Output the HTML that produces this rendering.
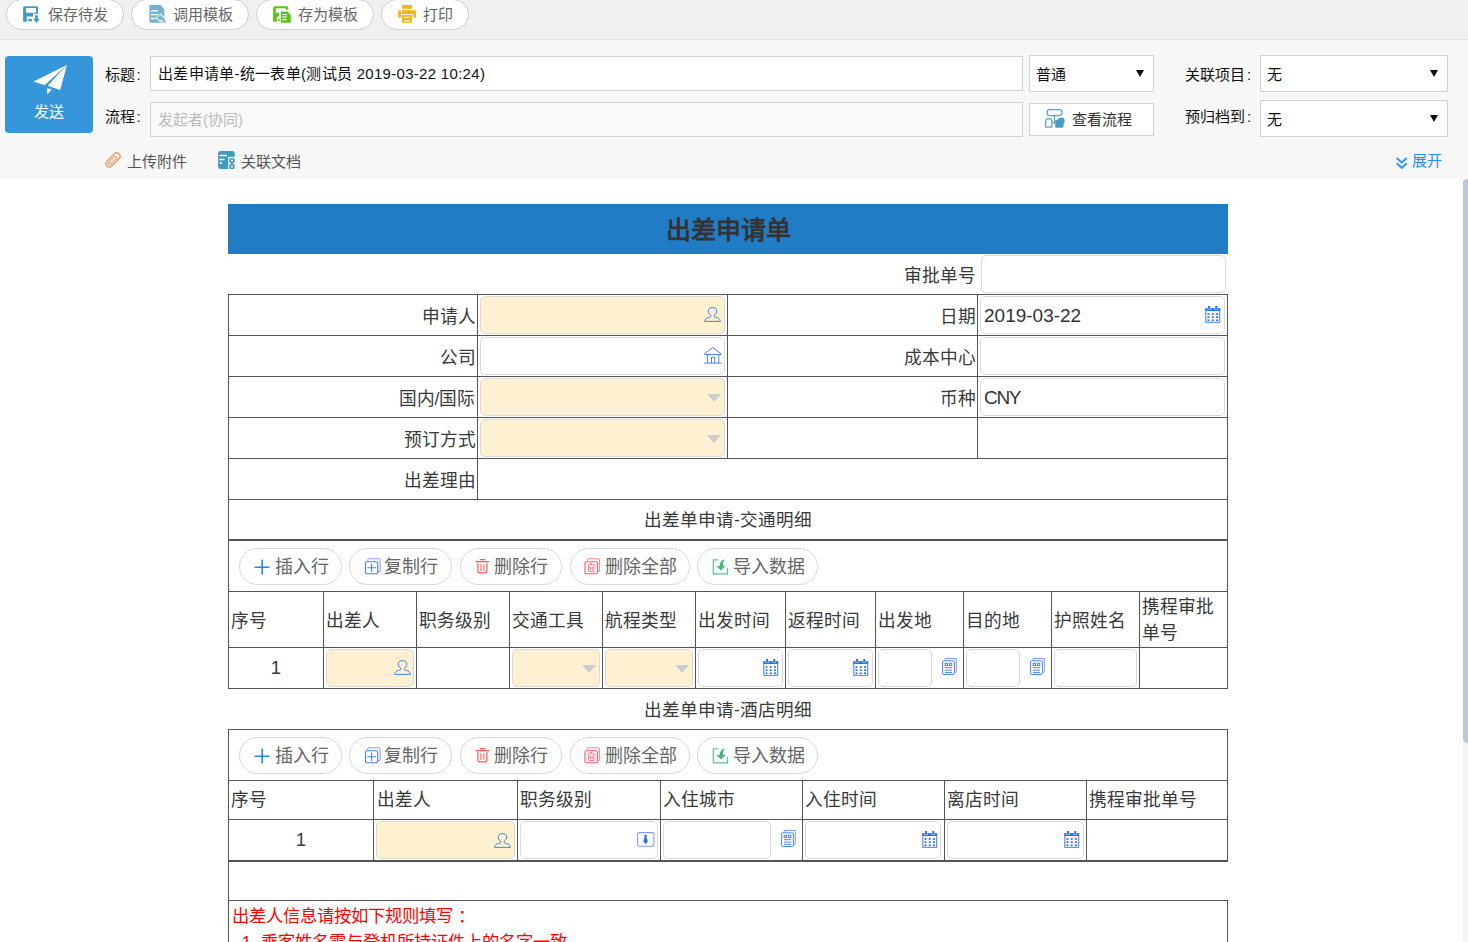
<!DOCTYPE html>
<html lang="zh-CN">
<head>
<meta charset="utf-8">
<title>出差申请单</title>
<style>
html,body{margin:0;padding:0}
html{width:1468px;height:942px;overflow:hidden}
body{width:1468px;height:942px;overflow:hidden;position:relative;background:#fff;font-family:"Liberation Sans",sans-serif;color:#333;font-size:15px}
div,span,svg{position:absolute;box-sizing:border-box;white-space:nowrap}
svg{overflow:visible}
#topbar{left:0;top:0;width:1468px;height:40px;background:#f0f0f0;border-bottom:1px solid #e3e3e3}
.pill{top:-1px;height:31px;border:1px solid #cfcfcf;border-radius:16px;background:#fff;color:#666;font-size:15px;line-height:29px}
.pill span{top:0;left:41px}
#head{left:0;top:40px;width:1468px;height:139px;background:#f7f7f7}
#send{left:5px;top:56px;width:88px;height:77px;background:#3696da;border-radius:4px;color:#fff}
#send span{left:0;width:88px;text-align:center;line-height:20px;height:20px;top:45.5px}
.lbl{color:#111;height:20px;line-height:20px}
.lbl i{font-style:normal;position:relative;left:2px}
.box{background:#fff;border:1px solid #d3d3d3}
.box span{line-height:20px;height:20px;color:#111}
.tri{width:0;height:0;border-left:4px solid transparent;border-right:4px solid transparent;border-top:7px solid #111}
.lnk{color:#555;height:20px;line-height:20px}
#thumb{left:1463px;top:179px;width:5px;height:564px;background:#bdc6d7;border-radius:4px 0 0 4px}
#track{left:1463px;top:743px;width:5px;height:199px;background:#f4f4f4}
#banner{left:228px;top:204px;width:1000px;height:50px;background:#217cc6;color:#333;font-size:25px;font-weight:bold;text-align:center;line-height:52.5px}
.h{height:1px;background:#555;left:228px;width:1000px}
.h2{height:2px}
.v{width:1px;background:#555}
.t{font-size:17.7px;color:#393939;height:26px;line-height:26px}
.s{font-size:17.6px}
.n{font-size:18.5px}
.r{text-align:right}
.c{text-align:center}
.in{height:38px;border:1px solid #d9d9d9;border-radius:5px;background:#fff}
.req{background:#fff0d2}
.in span{font-size:19px;color:#333;left:3px;top:5.5px;height:26px;line-height:26px}
.dd{width:0;height:0;border-left:7px solid transparent;border-right:7px solid transparent;border-top:8.5px solid #ccc}
.btn{height:37px;border:1px solid #d7d7d7;border-radius:19px;background:#fff;color:#666;font-size:18px}
.btn span{top:5px;height:26px;line-height:26px}
.red{color:#f00;font-size:17.33px}
.red i{font-style:normal;position:relative;left:5px}
</style>
</head>
<body>
<div id="topbar"></div>
<div class="pill" style="left:6px;width:118px">
<svg style="left:16px;top:6px" width="17" height="17" viewBox="0 0 17 17"><path fill="#459cc3" fill-rule="evenodd" d="M0.1 1.8Q0.1 0.2 1.7 0.2H13.5Q15.1 0.2 15.1 1.8V7.7H10V10.5H3.8V15.8H0.1ZM3 2.1H12.9V6.8H3ZM5.2 12.9H8.9V15.3H5.2ZM11.9 9.3H14.9V13.1H16.8L13.4 16.9L10.2 13.1H11.9Z"/></svg>
<span>保存待发</span></div>
<div class="pill" style="left:131px;width:118px">
<svg style="left:17px;top:5px" width="17" height="18" viewBox="0 0 17 18"><path fill="#74b3cf" d="M0.4 0.1H11.7L15.3 4.5V17.8H0.4Z"/><path stroke="#fff" stroke-width="1.3" d="M2 5.8H9M2 9.6H9M2 13.5H7"/><path fill="#74b3cf" stroke="#fff" stroke-width="1.7" paint-order="stroke" stroke-linejoin="round" d="M7.9 12.8L11.7 9V10.9Q15.6 11.2 16.8 17.8H14.6Q14.2 14.6 11.7 14.4V16.3Z"/></svg>
<span>调用模板</span></div>
<div class="pill" style="left:256px;width:118px">
<svg style="left:16px;top:6px" width="18" height="17" viewBox="0 0 18 17"><path fill="#5dc21e" d="M0.1 1.8Q0.1 0.2 1.7 0.2H13.7Q15.3 0.2 15.3 1.8V3.7H12.7V2.2H2.8V6.7H6.2V9.5L3.8 11.8V15.7H0.1ZM4.9 13.1H6.5V15H4.9Z"/><path fill="#5dc21e" d="M7.8 5.6H14.5L17.8 8.9V16.8H7.8Z"/><path stroke="#fff" stroke-width="1.2" d="M9 8.5H14M9 11H14M9 13.6H14"/></svg>
<span>存为模板</span></div>
<div class="pill" style="left:381px;width:88px">
<svg style="left:16px;top:5px" width="18" height="18" viewBox="0 0 18 18"><path fill="#f9b418" d="M4 0.1H14V3.8H4ZM0.2 5.2H17.9V12.7H15.3V9H2.9V12.7H0.2ZM4 10.1H14V17.8H4Z"/><path stroke="#fff" stroke-width="1.2" d="M6.5 12.3H11.5M6.5 15.8H11.5"/><path fill="#fff" d="M2.9 5.2H3.9V7.9H2.9Z"/></svg>
<span>打印</span></div>
<div id="head"></div>
<div id="send">
<svg style="left:0;top:0" width="88" height="77" viewBox="0 0 88 77"><path fill="#fff" d="M28.5 25.6L61.9 8.9L39.6 29.2ZM61.9 8.9L55.2 34.1L42.7 29.7ZM42.1 32.3L46.8 33.2L42.3 38.6Z"/></svg>
<span>发送</span></div>
<div class="lbl" style="left:104.5px;top:64.5px">标题<i>:</i></div>
<div class="lbl" style="left:104.5px;top:106.5px">流程<i>:</i></div>
<div class="box" style="left:150px;top:56px;width:873px;height:35px"><span style="left:7px;top:6.5px;letter-spacing:0.3px">出差申请单-统一表单(测试员 2019-03-22 10:24)</span></div>
<div class="box" style="left:150px;top:102px;width:873px;height:35px;background:#f9f9f9"><span style="left:7px;top:7px;color:#bbb">发起者(协同)</span></div>
<div class="box" style="left:1029px;top:55px;width:125px;height:37px"><span style="left:5.5px;top:8.5px">普通</span><div class="tri" style="left:106px;top:14px"></div></div>
<div class="box" style="left:1029px;top:103px;width:125px;height:33px">
<svg style="left:15px;top:5px" width="20" height="19" viewBox="0 0 20 19"><g fill="none" stroke="#55a4c9" stroke-width="1.25"><rect x="1.9" y="0.7" width="15.2" height="5.8" rx="2.9"/><path d="M9.5 6.5V14H7"/><path d="M0.7 18.1V12.5Q0.7 9.7 3.8 9.7Q6.9 9.7 6.9 12.5V18.1Z" stroke-linejoin="round"/></g><rect x="10.2" y="10.6" width="8.4" height="8.2" rx="1.6" fill="#4a9ec5"/><circle cx="16.4" cy="11.8" r="3.3" fill="#4a9ec5"/></svg>
<span style="left:42px;top:5.5px;color:#333">查看流程</span></div>
<div class="lbl" style="left:1185px;top:64.5px">关联项目<i>:</i></div>
<div class="lbl" style="left:1185px;top:106.5px">预归档到<i>:</i></div>
<div class="box" style="left:1260px;top:55px;width:188px;height:37px"><span style="left:5.5px;top:8.5px">无</span><div class="tri" style="left:169px;top:14px"></div></div>
<div class="box" style="left:1260px;top:100px;width:188px;height:37px"><span style="left:5.5px;top:8.5px">无</span><div class="tri" style="left:169px;top:14px"></div></div>
<svg style="left:105px;top:152px" width="16" height="16" viewBox="0 0 16 16"><g transform="rotate(-45 8 8)" fill="none" stroke="#ee9c68"><rect x="-0.5" y="4.6" width="17" height="6.8" rx="3.4" stroke-width="1.4"/><rect x="1.7" y="6.7" width="11" height="2.6" rx="1.3" stroke-width="1.1"/></g></svg>
<div class="lnk" style="left:127px;top:152.3px">上传附件</div>
<svg style="left:218px;top:151px" width="17" height="18" viewBox="0 0 17 18"><rect x="0.1" y="0" width="16.6" height="17.9" rx="2.6" fill="#4099c0"/><rect x="10.2" y="5.8" width="7" height="12.4" fill="#f7f7f7"/><path stroke="#fff" stroke-width="1.3" d="M1.4 4.5H9M1.4 8.5H6.5M1.6 12H4"/><g fill="#4099c0"><rect x="11.3" y="6.9" width="5.3" height="5.1" rx="1.5"/><rect x="11.3" y="12.9" width="5.3" height="5" rx="1.5"/><rect x="13.1" y="11.5" width="1.7" height="2"/></g><rect x="13" y="8.5" width="2" height="2" rx="0.4" fill="#fff"/><rect x="13" y="14.5" width="2" height="2" rx="0.4" fill="#fff"/></svg>
<div class="lnk" style="left:241px;top:152.3px">关联文档</div>
<svg style="left:1395.5px;top:156.5px" width="12" height="12" viewBox="0 0 12 12"><path fill="none" stroke="#2e9bf5" stroke-width="2" d="M0.7 0.9L5.75 5.4L10.8 0.9M0.7 6.2L5.75 10.8L10.8 6.2"/></svg>
<div class="lnk" style="left:1412px;top:150.5px;color:#2b8bf2">展开</div>
<div id="thumb"></div><div id="track"></div>
<div id="banner">出差申请单</div>
<div class="h" style="top:294px"></div>
<div class="h" style="top:335px"></div>
<div class="h" style="top:376px"></div>
<div class="h" style="top:417px"></div>
<div class="h" style="top:458px"></div>
<div class="h" style="top:499px"></div>
<div class="h" style="top:591px"></div>
<div class="h" style="top:647px"></div>
<div class="h" style="top:688px"></div>
<div class="h" style="top:729px"></div>
<div class="h" style="top:780px"></div>
<div class="h" style="top:819px"></div>
<div class="h" style="top:900px"></div>
<div class="h h2" style="top:539px"></div>
<div class="h h2" style="top:860px"></div>
<div class="v" style="left:228px;top:294px;height:395px"></div>
<div class="v" style="left:228px;top:729px;height:213px"></div>
<div class="v" style="left:1227px;top:294px;height:395px"></div>
<div class="v" style="left:1227px;top:729px;height:133px"></div>
<div class="v" style="left:1227px;top:900px;height:42px"></div>
<div class="v" style="left:477px;top:294px;height:206px"></div>
<div class="v" style="left:727px;top:294px;height:165px"></div>
<div class="v" style="left:977px;top:294px;height:165px"></div>
<div class="v" style="left:323px;top:591px;height:98px"></div>
<div class="v" style="left:416px;top:591px;height:98px"></div>
<div class="v" style="left:509px;top:591px;height:98px"></div>
<div class="v" style="left:602px;top:591px;height:98px"></div>
<div class="v" style="left:695px;top:591px;height:98px"></div>
<div class="v" style="left:785px;top:591px;height:98px"></div>
<div class="v" style="left:875px;top:591px;height:98px"></div>
<div class="v" style="left:963px;top:591px;height:98px"></div>
<div class="v" style="left:1051px;top:591px;height:98px"></div>
<div class="v" style="left:1139px;top:591px;height:98px"></div>
<div class="v" style="left:373px;top:780px;height:81px"></div>
<div class="v" style="left:517px;top:780px;height:81px"></div>
<div class="v" style="left:660px;top:780px;height:81px"></div>
<div class="v" style="left:802px;top:780px;height:81px"></div>
<div class="v" style="left:944px;top:780px;height:81px"></div>
<div class="v" style="left:1086px;top:780px;height:81px"></div>
<div class="t r" style="left:735.5px;width:240px;top:262.8px">审批单号</div>
<div class="in" style="left:981px;top:255px;width:245px"></div>
<div class="t r" style="left:235.5px;width:240px;top:303.8px">申请人</div>
<div class="in req" style="left:480px;top:296px;width:245px"></div>
<svg style="left:704px;top:307px" width="17" height="15" viewBox="0 0 17 15"><path fill="none" stroke="#3b7de9" stroke-width="0.95" stroke-linejoin="round" d="M0.6 14.4H16.4Q16 10.8 11.5 10.3Q9.6 10 10.3 8.2L12.6 5.8V2.6Q12 0.6 8.5 0.6Q5 0.6 4.4 2.6V5.8L6.7 8.2Q7.4 10 5.5 10.3Q1 10.8 0.6 14.4Z"/></svg>
<div class="t r" style="left:735.5px;width:240px;top:303.8px">日期</div>
<div class="in" style="left:980px;top:296px;width:245px"><span>2019-03-22</span></div>
<svg style="left:1204.5px;top:306px" width="16" height="17" viewBox="0 0 16 17"><path fill="#1a73e8" d="M0.3 2.3H15.2V5H0.3Z"/><path fill="#fff" d="M2.3 1.9H5.8V4.1H2.3ZM9.5 1.9H13V4.1H9.5Z"/><path fill="#1a73e8" d="M3.1 0H5V3.4H3.1ZM10.3 0H12.2V3.4H10.3Z"/><rect x="0.8" y="2.8" width="13.9" height="13.5" fill="none" stroke="#3d7df0" stroke-width="1"/><g fill="#2f6fee"><rect x="2.5" y="7.2" width="1.9" height="1.7"/><rect x="6.8" y="7.2" width="1.9" height="1.7"/><rect x="11" y="7.2" width="1.9" height="1.7"/><rect x="2.5" y="10.3" width="1.9" height="1.7"/><rect x="6.8" y="10.3" width="1.9" height="1.7"/><rect x="11" y="10.3" width="1.9" height="1.7"/><rect x="2.5" y="13.4" width="1.9" height="1.7"/><rect x="6.8" y="13.4" width="1.9" height="1.7"/><rect x="11" y="13.4" width="1.9" height="1.7"/></g></svg>
<div class="t r" style="left:235.5px;width:240px;top:344.8px">公司</div>
<div class="in" style="left:480px;top:337px;width:245px"></div>
<svg style="left:703.5px;top:346.8px" width="18" height="17" viewBox="0 0 18 17"><path fill="none" stroke="#4a80ee" stroke-width="1" d="M0 7.2L8.8 0.5L17.7 7.2M0.8 7.5H17M0 16.1H17.7M3.4 7.5V16.1M14.8 7.5V16.1M7.5 16.1V10.3H10.7V16.1"/></svg>
<div class="t r" style="left:735.5px;width:240px;top:344.8px">成本中心</div>
<div class="in" style="left:980px;top:337px;width:245px"></div>
<div class="t r" style="left:235.5px;width:240px;top:385.8px">国内/国际</div>
<div class="in req" style="left:480px;top:378px;width:245px"><div class="dd" style="left:225.5px;top:15px"></div></div>
<div class="t r" style="left:735.5px;width:240px;top:385.8px">币种</div>
<div class="in" style="left:980px;top:378px;width:245px"><span style="letter-spacing:-1.3px">CNY</span></div>
<div class="t r" style="left:235.5px;width:240px;top:426.8px">预订方式</div>
<div class="in req" style="left:480px;top:419px;width:245px"><div class="dd" style="left:225.5px;top:15px"></div></div>
<div class="t r" style="left:235.5px;width:240px;top:467.8px">出差理由</div>
<div class="t s c" style="left:228px;width:1000px;top:506.5px">出差单申请-交通明细</div>
<div class="t s c" style="left:228px;width:1000px;top:696.7px">出差单申请-酒店明细</div>
<div class="btn" style="left:239px;top:548px;width:103px"><svg style="left:14px;top:10px" width="16" height="16" viewBox="0 0 16 16"><path fill="none" stroke="#1e86ef" stroke-width="1.6" stroke-linecap="round" d="M1.2 8.2H15M8.2 1.2V15"/></svg><span style="left:34.9px">插入行</span></div>
<div class="btn" style="left:349px;top:548px;width:103px"><svg style="left:15px;top:9px" width="16" height="16" viewBox="0 0 16 16"><g fill="none" stroke-width="1.1"><path stroke="#8f9ef5" d="M2.8 3.3V1.9Q2.8 0.8 3.9 0.8H14Q15.1 0.8 15.1 1.9V12.5Q15.1 13.6 14 13.6H13"/><rect x="0.5" y="3.7" width="12.2" height="12" rx="1.2" stroke="#4384f4"/><path stroke="#4384f4" d="M2.3 9.7H10.9M6.6 5.4V14"/></g></svg><span style="left:34.4px">复制行</span></div>
<div class="btn" style="left:460px;top:548px;width:102px"><svg style="left:14px;top:10px" width="15" height="15" viewBox="0 0 15 15"><g fill="none" stroke="#ff5660" stroke-width="1.2" stroke-linecap="round"><path d="M5.2 0.7H9.6M1.1 2.6H13.8"/><path d="M2.9 4.4V12.3Q2.9 13.9 4.5 13.9H10.3Q11.9 13.9 11.9 12.3V4.4"/><path stroke="#ff7d55" d="M5.9 5.6V11.6M8.9 5.6V11.6"/></g></svg><span style="left:33.4px">删除行</span></div>
<div class="btn" style="left:570px;top:548px;width:120px"><svg style="left:13px;top:9px" width="17" height="17" viewBox="0 0 17 17"><g fill="none" stroke-width="1.1"><path stroke="#ff8f8a" d="M3.6 3.3V1.9Q3.6 0.8 4.7 0.8H14.4Q15.5 0.8 15.5 1.9V12.5Q15.5 13.6 14.4 13.6H13.7"/><rect x="1" y="3.7" width="12.4" height="12" rx="1.2" stroke="#ff5a64"/><g stroke="#ff5a7a" stroke-width="0.9"><path d="M6.1 5.6H8.3M3.4 6.9H11"/><path d="M4.5 7.9V12.6Q4.5 13.6 5.5 13.6H8.9Q9.9 13.6 9.9 12.6V7.9"/><path d="M6.3 8.9V12.2M8.2 8.9V12.2"/></g></g></svg><span style="left:34.4px">删除全部</span></div>
<div class="btn" style="left:697px;top:548px;width:121px"><svg style="left:14px;top:10px" width="16" height="16" viewBox="0 0 16 16"><path fill="none" stroke="#5cc28e" stroke-width="1.2" d="M6 0.9H1.3V14.9H15.5V9"/><path fill="#3dbb7c" d="M12.9 0.5Q8.2 1 7.6 6.9H4.6L8.9 11.6L13.4 6.9H11.2Q10.4 3.2 12.9 0.5Z"/></svg><span style="left:35.4px">导入数据</span></div>
<div class="btn" style="left:239px;top:737px;width:103px"><svg style="left:14px;top:10px" width="16" height="16" viewBox="0 0 16 16"><path fill="none" stroke="#1e86ef" stroke-width="1.6" stroke-linecap="round" d="M1.2 8.2H15M8.2 1.2V15"/></svg><span style="left:34.9px">插入行</span></div>
<div class="btn" style="left:349px;top:737px;width:103px"><svg style="left:15px;top:9px" width="16" height="16" viewBox="0 0 16 16"><g fill="none" stroke-width="1.1"><path stroke="#8f9ef5" d="M2.8 3.3V1.9Q2.8 0.8 3.9 0.8H14Q15.1 0.8 15.1 1.9V12.5Q15.1 13.6 14 13.6H13"/><rect x="0.5" y="3.7" width="12.2" height="12" rx="1.2" stroke="#4384f4"/><path stroke="#4384f4" d="M2.3 9.7H10.9M6.6 5.4V14"/></g></svg><span style="left:34.4px">复制行</span></div>
<div class="btn" style="left:460px;top:737px;width:102px"><svg style="left:14px;top:10px" width="15" height="15" viewBox="0 0 15 15"><g fill="none" stroke="#ff5660" stroke-width="1.2" stroke-linecap="round"><path d="M5.2 0.7H9.6M1.1 2.6H13.8"/><path d="M2.9 4.4V12.3Q2.9 13.9 4.5 13.9H10.3Q11.9 13.9 11.9 12.3V4.4"/><path stroke="#ff7d55" d="M5.9 5.6V11.6M8.9 5.6V11.6"/></g></svg><span style="left:33.4px">删除行</span></div>
<div class="btn" style="left:570px;top:737px;width:120px"><svg style="left:13px;top:9px" width="17" height="17" viewBox="0 0 17 17"><g fill="none" stroke-width="1.1"><path stroke="#ff8f8a" d="M3.6 3.3V1.9Q3.6 0.8 4.7 0.8H14.4Q15.5 0.8 15.5 1.9V12.5Q15.5 13.6 14.4 13.6H13.7"/><rect x="1" y="3.7" width="12.4" height="12" rx="1.2" stroke="#ff5a64"/><g stroke="#ff5a7a" stroke-width="0.9"><path d="M6.1 5.6H8.3M3.4 6.9H11"/><path d="M4.5 7.9V12.6Q4.5 13.6 5.5 13.6H8.9Q9.9 13.6 9.9 12.6V7.9"/><path d="M6.3 8.9V12.2M8.2 8.9V12.2"/></g></g></svg><span style="left:34.4px">删除全部</span></div>
<div class="btn" style="left:697px;top:737px;width:121px"><svg style="left:14px;top:10px" width="16" height="16" viewBox="0 0 16 16"><path fill="none" stroke="#5cc28e" stroke-width="1.2" d="M6 0.9H1.3V14.9H15.5V9"/><path fill="#3dbb7c" d="M12.9 0.5Q8.2 1 7.6 6.9H4.6L8.9 11.6L13.4 6.9H11.2Q10.4 3.2 12.9 0.5Z"/></svg><span style="left:35.4px">导入数据</span></div>
<div class="t" style="left:230.5px;top:607.5px">序号</div>
<div class="t" style="left:326px;top:607.5px">出差人</div>
<div class="t" style="left:418.5px;top:607.5px">职务级别</div>
<div class="t" style="left:511.5px;top:607.5px">交通工具</div>
<div class="t" style="left:604.5px;top:607.5px">航程类型</div>
<div class="t" style="left:698px;top:607.5px">出发时间</div>
<div class="t" style="left:787.5px;top:607.5px">返程时间</div>
<div class="t" style="left:878px;top:607.5px">出发地</div>
<div class="t" style="left:966px;top:607.5px">目的地</div>
<div class="t" style="left:1054px;top:607.5px">护照姓名</div>
<div class="t" style="left:1141.5px;top:594.0px">携程审批</div>
<div class="t" style="left:1141.5px;top:620.0px">单号</div>
<div class="t n c" style="left:229px;width:94px;top:655px">1</div>
<div class="in req" style="left:326px;top:649px;width:88px"></div>
<svg style="left:393.5px;top:660px" width="17" height="15" viewBox="0 0 17 15"><path fill="none" stroke="#3b7de9" stroke-width="0.95" stroke-linejoin="round" d="M0.6 14.4H16.4Q16 10.8 11.5 10.3Q9.6 10 10.3 8.2L12.6 5.8V2.6Q12 0.6 8.5 0.6Q5 0.6 4.4 2.6V5.8L6.7 8.2Q7.4 10 5.5 10.3Q1 10.8 0.6 14.4Z"/></svg>
<div class="in req" style="left:512px;top:649px;width:88px"><div class="dd" style="left:68.5px;top:15px"></div></div>
<div class="in req" style="left:605px;top:649px;width:88px"><div class="dd" style="left:68.5px;top:15px"></div></div>
<div class="in" style="left:698px;top:649px;width:85px"></div>
<svg style="left:763px;top:659px" width="16" height="17" viewBox="0 0 16 17"><path fill="#1a73e8" d="M0.3 2.3H15.2V5H0.3Z"/><path fill="#fff" d="M2.3 1.9H5.8V4.1H2.3ZM9.5 1.9H13V4.1H9.5Z"/><path fill="#1a73e8" d="M3.1 0H5V3.4H3.1ZM10.3 0H12.2V3.4H10.3Z"/><rect x="0.8" y="2.8" width="13.9" height="13.5" fill="none" stroke="#3d7df0" stroke-width="1"/><g fill="#2f6fee"><rect x="2.5" y="7.2" width="1.9" height="1.7"/><rect x="6.8" y="7.2" width="1.9" height="1.7"/><rect x="11" y="7.2" width="1.9" height="1.7"/><rect x="2.5" y="10.3" width="1.9" height="1.7"/><rect x="6.8" y="10.3" width="1.9" height="1.7"/><rect x="11" y="10.3" width="1.9" height="1.7"/><rect x="2.5" y="13.4" width="1.9" height="1.7"/><rect x="6.8" y="13.4" width="1.9" height="1.7"/><rect x="11" y="13.4" width="1.9" height="1.7"/></g></svg>
<div class="in" style="left:788px;top:649px;width:85px"></div>
<svg style="left:853px;top:659px" width="16" height="17" viewBox="0 0 16 17"><path fill="#1a73e8" d="M0.3 2.3H15.2V5H0.3Z"/><path fill="#fff" d="M2.3 1.9H5.8V4.1H2.3ZM9.5 1.9H13V4.1H9.5Z"/><path fill="#1a73e8" d="M3.1 0H5V3.4H3.1ZM10.3 0H12.2V3.4H10.3Z"/><rect x="0.8" y="2.8" width="13.9" height="13.5" fill="none" stroke="#3d7df0" stroke-width="1"/><g fill="#2f6fee"><rect x="2.5" y="7.2" width="1.9" height="1.7"/><rect x="6.8" y="7.2" width="1.9" height="1.7"/><rect x="11" y="7.2" width="1.9" height="1.7"/><rect x="2.5" y="10.3" width="1.9" height="1.7"/><rect x="6.8" y="10.3" width="1.9" height="1.7"/><rect x="11" y="10.3" width="1.9" height="1.7"/><rect x="2.5" y="13.4" width="1.9" height="1.7"/><rect x="6.8" y="13.4" width="1.9" height="1.7"/><rect x="11" y="13.4" width="1.9" height="1.7"/></g></svg>
<div class="in" style="left:878px;top:649px;width:54px"></div>
<svg style="left:942px;top:658px" width="16" height="17" viewBox="0 0 16 17"><g fill="none" stroke="#4b83f0" stroke-width="1"><path stroke="#7d9cf3" d="M3.2 2.3V0.5H14.3V13.5Q14.3 14.3 13.5 14.3H12.6"/><rect x="0.6" y="2.8" width="11.8" height="13.7" rx="1.2"/><rect x="3.1" y="5.3" width="2.4" height="2.2"/><rect x="7.4" y="5.3" width="2.4" height="2.2"/><path d="M3 9.7H10M3 12.2H10M3 14.6H10"/></g></svg>
<div class="in" style="left:966px;top:649px;width:54px"></div>
<svg style="left:1030px;top:658px" width="16" height="17" viewBox="0 0 16 17"><g fill="none" stroke="#4b83f0" stroke-width="1"><path stroke="#7d9cf3" d="M3.2 2.3V0.5H14.3V13.5Q14.3 14.3 13.5 14.3H12.6"/><rect x="0.6" y="2.8" width="11.8" height="13.7" rx="1.2"/><rect x="3.1" y="5.3" width="2.4" height="2.2"/><rect x="7.4" y="5.3" width="2.4" height="2.2"/><path d="M3 9.7H10M3 12.2H10M3 14.6H10"/></g></svg>
<div class="in" style="left:1054px;top:649px;width:83px"></div>
<div class="t" style="left:230.5px;top:787px">序号</div>
<div class="t" style="left:376.5px;top:787px">出差人</div>
<div class="t" style="left:520px;top:787px">职务级别</div>
<div class="t" style="left:662.5px;top:787px">入住城市</div>
<div class="t" style="left:805px;top:787px">入住时间</div>
<div class="t" style="left:947px;top:787px">离店时间</div>
<div class="t" style="left:1089px;top:787px">携程审批单号</div>
<div class="t n c" style="left:229px;width:144px;top:827.3px">1</div>
<div class="in req" style="left:376px;top:821px;width:139px"></div>
<svg style="left:494px;top:832.5px" width="17" height="15" viewBox="0 0 17 15"><path fill="none" stroke="#3b7de9" stroke-width="0.95" stroke-linejoin="round" d="M0.6 14.4H16.4Q16 10.8 11.5 10.3Q9.6 10 10.3 8.2L12.6 5.8V2.6Q12 0.6 8.5 0.6Q5 0.6 4.4 2.6V5.8L6.7 8.2Q7.4 10 5.5 10.3Q1 10.8 0.6 14.4Z"/></svg>
<div class="in" style="left:520px;top:821px;width:138px"></div>
<svg style="left:636.5px;top:832px" width="18" height="15" viewBox="0 0 18 15"><rect x="0.6" y="0.6" width="16.3" height="13.6" rx="1.6" fill="none" stroke="#7f9df2" stroke-width="1.1"/><path fill="#1a73e8" d="M6.9 3H10.2L9.3 4.4L10.8 9.6L8.6 11.9L6.4 9.6L7.8 4.4Z"/></svg>
<div class="in" style="left:663px;top:821px;width:108px"></div>
<svg style="left:781px;top:830px" width="16" height="17" viewBox="0 0 16 17"><g fill="none" stroke="#4b83f0" stroke-width="1"><path stroke="#7d9cf3" d="M3.2 2.3V0.5H14.3V13.5Q14.3 14.3 13.5 14.3H12.6"/><rect x="0.6" y="2.8" width="11.8" height="13.7" rx="1.2"/><rect x="3.1" y="5.3" width="2.4" height="2.2"/><rect x="7.4" y="5.3" width="2.4" height="2.2"/><path d="M3 9.7H10M3 12.2H10M3 14.6H10"/></g></svg>
<div class="in" style="left:805px;top:821px;width:136px"></div>
<svg style="left:921.5px;top:831px" width="16" height="17" viewBox="0 0 16 17"><path fill="#1a73e8" d="M0.3 2.3H15.2V5H0.3Z"/><path fill="#fff" d="M2.3 1.9H5.8V4.1H2.3ZM9.5 1.9H13V4.1H9.5Z"/><path fill="#1a73e8" d="M3.1 0H5V3.4H3.1ZM10.3 0H12.2V3.4H10.3Z"/><rect x="0.8" y="2.8" width="13.9" height="13.5" fill="none" stroke="#3d7df0" stroke-width="1"/><g fill="#2f6fee"><rect x="2.5" y="7.2" width="1.9" height="1.7"/><rect x="6.8" y="7.2" width="1.9" height="1.7"/><rect x="11" y="7.2" width="1.9" height="1.7"/><rect x="2.5" y="10.3" width="1.9" height="1.7"/><rect x="6.8" y="10.3" width="1.9" height="1.7"/><rect x="11" y="10.3" width="1.9" height="1.7"/><rect x="2.5" y="13.4" width="1.9" height="1.7"/><rect x="6.8" y="13.4" width="1.9" height="1.7"/><rect x="11" y="13.4" width="1.9" height="1.7"/></g></svg>
<div class="in" style="left:947px;top:821px;width:137px"></div>
<svg style="left:1063.5px;top:831px" width="16" height="17" viewBox="0 0 16 17"><path fill="#1a73e8" d="M0.3 2.3H15.2V5H0.3Z"/><path fill="#fff" d="M2.3 1.9H5.8V4.1H2.3ZM9.5 1.9H13V4.1H9.5Z"/><path fill="#1a73e8" d="M3.1 0H5V3.4H3.1ZM10.3 0H12.2V3.4H10.3Z"/><rect x="0.8" y="2.8" width="13.9" height="13.5" fill="none" stroke="#3d7df0" stroke-width="1"/><g fill="#2f6fee"><rect x="2.5" y="7.2" width="1.9" height="1.7"/><rect x="6.8" y="7.2" width="1.9" height="1.7"/><rect x="11" y="7.2" width="1.9" height="1.7"/><rect x="2.5" y="10.3" width="1.9" height="1.7"/><rect x="6.8" y="10.3" width="1.9" height="1.7"/><rect x="11" y="10.3" width="1.9" height="1.7"/><rect x="2.5" y="13.4" width="1.9" height="1.7"/><rect x="6.8" y="13.4" width="1.9" height="1.7"/><rect x="11" y="13.4" width="1.9" height="1.7"/></g></svg>
<div class="t red" style="left:232px;top:903px">出差人信息请按如下规则填写<i>：</i></div>
<div class="t red" style="left:232px;top:929px;height:13px;overflow:hidden">&nbsp;&nbsp;1. 乘客姓名需与登机所持证件上的名字一致</div>
</body>
</html>
